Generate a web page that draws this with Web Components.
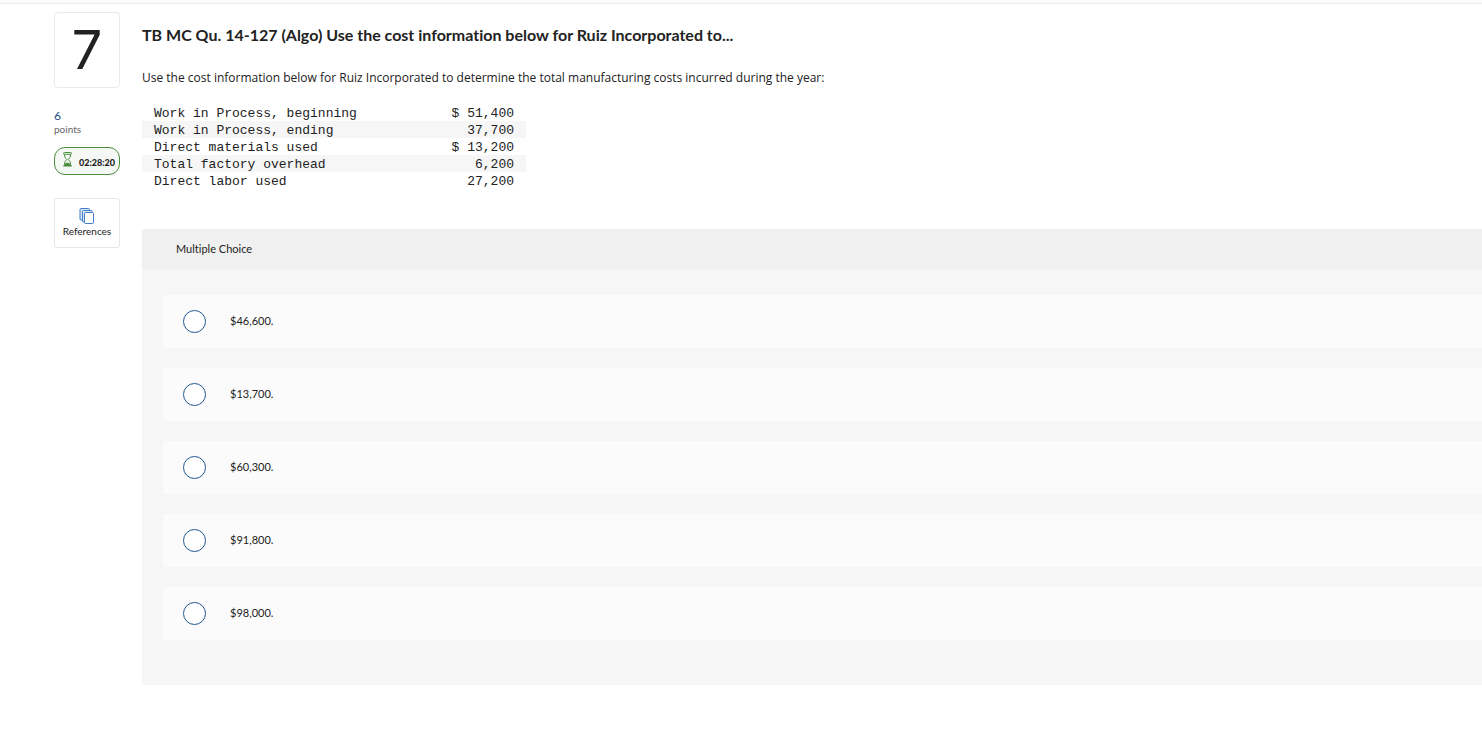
<!DOCTYPE html>
<html lang="en">
<head>
<meta charset="utf-8">
<meta name="viewport" content="width=device-width, initial-scale=1">
<title>Question 7</title>
<style>
    body {
        margin: 0;
        background: #fff;
        color: #222;
        font-family: Lato, "Open Sans", sans-serif;
        font-size: 13px;
        font-variant-ligatures: none;
    }
</style>
</head>
<body>

<quiz-page>
    <question-info slot="info" number="7" points="6" time="02:28:20"></question-info>
    <question-body heading="TB MC Qu. 14-127 (Algo) Use the cost information below for Ruiz Incorporated to...">
        Use the cost information below for Ruiz Incorporated to determine the total manufacturing costs incurred during the year:
        <cost-table slot="data"></cost-table>
    </question-body>
    <choice-group heading="Multiple Choice">
        <answer-choice>$46,600.</answer-choice>
        <answer-choice>$13,700.</answer-choice>
        <answer-choice>$60,300.</answer-choice>
        <answer-choice>$91,800.</answer-choice>
        <answer-choice>$98,000.</answer-choice>
    </choice-group>
</quiz-page>

<template id="quiz-page">
    <style>
        :host {
            display: block;
        }

        .topbar {
            height: 3px;
            background: #fafafa;
            border-bottom: 1px solid #ececec;
        }

        .layout {
            display: grid;
            grid-template-columns: 66px minmax(0, 1fr);
            column-gap: 22px;
            padding: 8px 0 60px 54px;
        }
    </style>
    <div class="topbar"></div>
    <div class="layout">
        <aside><slot name="info"></slot></aside>
        <main><slot></slot></main>
    </div>
</template>

<template id="question-info">
    <style>
        :host {
            display: flex;
            flex-direction: column;
        }

        .number {
            box-sizing: border-box;
            height: 76px;
            border: 1px solid #e9e9e9;
            border-radius: 4px;
            font-size: 54px;
            line-height: 74px;
            text-align: center;
            font-family: Inter, sans-serif;
        }

        .points {
            margin-top: 21px;
            font-size: 10px;
            line-height: 14px;
            color: #666;
        }

        .points b {
            display: block;
            font-size: 12px;
            font-weight: 400;
            line-height: 13px;
            color: #1b4a86;
        }

        .timer {
            box-sizing: border-box;
            display: flex;
            align-items: center;
            justify-content: space-between;
            height: 28px;
            margin-top: 11px;
            padding: 0 4px 0 8px;
            border: 1px solid #4a8f3c;
            border-radius: 11px;
            background: #f6f8f6;
            font-size: 9px;
            font-weight: 900;
        }

        .timer svg {
            margin-bottom: 3px;
        }

        .timer span {
            padding-top: 3px;
        }

        button {
            display: flex;
            flex-direction: column;
            align-items: center;
            gap: 1px;
            height: 50px;
            margin: 23px 0 0;
            padding: 9px 0 0;
            border: 1px solid #e6e6e6;
            border-radius: 3px;
            background: #fff;
            color: #222;
            font: inherit;
            font-size: 10px;
            line-height: 12px;
        }
    </style>
    <div class="number"></div>
    <div class="points"><b></b>points</div>
    <div class="timer">
        <svg width="9" height="15" viewBox="0 0 9 15" fill="none" stroke="#4a8f3c" aria-hidden="true">
            <rect x=".5" y=".5" width="8" height="1.800" rx=".9"/>
            <path d="M1.500 2.300c0 2.700.8 3.600 2.300 5.200-1.500 1.500-2.300 2.500-2.300 5.200M7.500 2.300c0 2.700-.8 3.600-2.300 5.200 1.500 1.500 2.300 2.500 2.300 5.200"/>
            <path d="M.3 14.500v-1.200l1.500-1c.5-.9 1.500-1.500 2.700-1.500s2.200.6 2.700 1.500l1.500 1v1.200z" fill="#4a8f3c" stroke="none"/>
        </svg>
        <span></span>
    </div>
    <button type="button">
        <svg width="16" height="16" viewBox="0 0 16 16" fill="none" stroke="#3f7cc9" aria-hidden="true">
            <path d="M3 12H2a1 1 0 0 1-1-1V1.500a1 1 0 0 1 1-1h7.500a1 1 0 0 1 1 1V2" fill="#dce8f6"/>
            <path d="M5.500 14h-1a1 1 0 0 1-1-1V3.500a1 1 0 0 1 1-1H12a1 1 0 0 1 1 1V4" fill="#dce8f6"/>
            <rect x="5.500" y="4.500" width="9" height="11" rx="1" fill="#fff"/>
        </svg>
        References
    </button>
</template>

<template id="question-body">
    <style>
        :host {
            display: block;
        }

        h1 {
            margin: 0;
            padding-top: 11px;
            font-size: 16px;
            font-weight: 700;
            line-height: 24px;
        }

        .text {
            margin: 21px 0 16px;
            font-family: "Open Sans", sans-serif;
            font-size: 12px;
            line-height: 20px;
        }
    </style>
    <h1></h1>
    <div class="text"><slot></slot></div>
    <slot name="data"></slot>
</template>

<template id="cost-table">
    <style>
        :host {
            display: block;
        }

        table {
            width: 384px;
            border-collapse: collapse;
            font-family: "Liberation Mono", "Courier New", monospace;
            font-size: 13px;
            line-height: 15px;
        }

        th, td {
            padding: 2px 12px 0;
            font-weight: 400;
            text-align: left;
            white-space: pre;
        }

        td {
            text-align: right;
        }

        tr:nth-child(even) {
            background: #f6f6f6;
        }
    </style>
    <table><tbody></tbody></table>
</template>

<template id="choice-group">
    <style>
        :host {
            display: block;
            margin-top: 40px;
            border-radius: 3px 0 0 3px;
            overflow: hidden;
            background: #f6f6f6;
        }

        h2 {
            margin: 0;
            padding-left: 34px;
            background: #f0f0f0;
            font-size: 11px;
            font-weight: 400;
            line-height: 40px;
        }

        .choices {
            display: grid;
            gap: 20px;
            padding: 26px 0 45px 21px;
            font-size: 11px;
        }
    </style>
    <h2></h2>
    <div class="choices" role="radiogroup"><slot></slot></div>
</template>

<template id="answer-choice">
    <style>
        :host {
            display: block;
            border-radius: 3px 0 0 3px;
            background: #fbfbfb;
        }

        label {
            display: flex;
            align-items: center;
            gap: 24px;
            padding: 15px 20px;
            line-height: 16px;
        }

        span {
            padding-bottom: 2px;
        }

        input {
            appearance: none;
            width: 23px;
            height: 23px;
            margin: 0;
            border: 1px solid #1f568f;
            border-radius: 50%;
            background: #fff;
        }

        input:checked {
            background: #1f568f;
            box-shadow: inset 0 0 0 5px #fff;
        }
    </style>
    <label><input type="radio"><span><slot></slot></span></label>
</template>

<script>
class BaseElement extends HTMLElement {
    constructor() {
        super();
        const template = document.getElementById(this.localName)
        this.attachShadow({ mode: 'open' })
        this.shadowRoot.appendChild(template.content.cloneNode(true))
    }
}

class QuizPage extends BaseElement {}

class QuestionInfo extends BaseElement {
    connectedCallback() {
        this.shadowRoot.querySelector('.number').textContent = this.getAttribute('number')
        this.shadowRoot.querySelector('.points b').textContent = this.getAttribute('points')
        this.shadowRoot.querySelector('.timer span').textContent = this.getAttribute('time')
    }
}

class QuestionBody extends BaseElement {
    connectedCallback() {
        this.shadowRoot.querySelector('h1').textContent = this.getAttribute('heading')
    }
}

class CostTable extends BaseElement {
    set rows(rows) {
        const tbody = this.shadowRoot.querySelector('tbody')
        tbody.replaceChildren()
        rows.forEach(([name, amount]) => {
            const tr = tbody.insertRow()
            const th = document.createElement('th')
            th.scope = 'row'
            th.textContent = name
            tr.appendChild(th)
            tr.insertCell().textContent = amount
        })
    }
}

class ChoiceGroup extends BaseElement {
    connectedCallback() {
        const heading = this.getAttribute('heading')
        this.shadowRoot.querySelector('h2').textContent = heading
        this.shadowRoot.querySelector('.choices').setAttribute('aria-label', heading)

        // radios in separate shadow roots don't share a group, so clear the others here
        this.addEventListener('choice-picked', (e) => {
            this.querySelectorAll('answer-choice').forEach((choice) => {
                if (choice !== e.target) choice.clear()
            })
        })
    }
}

class AnswerChoice extends BaseElement {
    connectedCallback() {
        this.input = this.shadowRoot.querySelector('input')
        this.input.addEventListener('change', () => {
            this.dispatchEvent(new CustomEvent('choice-picked', { bubbles: true }))
        })
    }

    clear() {
        this.input.checked = false
    }
}

window.customElements.define('quiz-page', QuizPage)
window.customElements.define('question-info', QuestionInfo)
window.customElements.define('question-body', QuestionBody)
window.customElements.define('cost-table', CostTable)
window.customElements.define('choice-group', ChoiceGroup)
window.customElements.define('answer-choice', AnswerChoice)

document.querySelector('cost-table').rows = [
    ['Work in Process, beginning', '$ 51,400'],
    ['Work in Process, ending', '37,700'],
    ['Direct materials used', '$ 13,200'],
    ['Total factory overhead', '6,200'],
    ['Direct labor used', '27,200'],
]
</script>
</body>
</html>
